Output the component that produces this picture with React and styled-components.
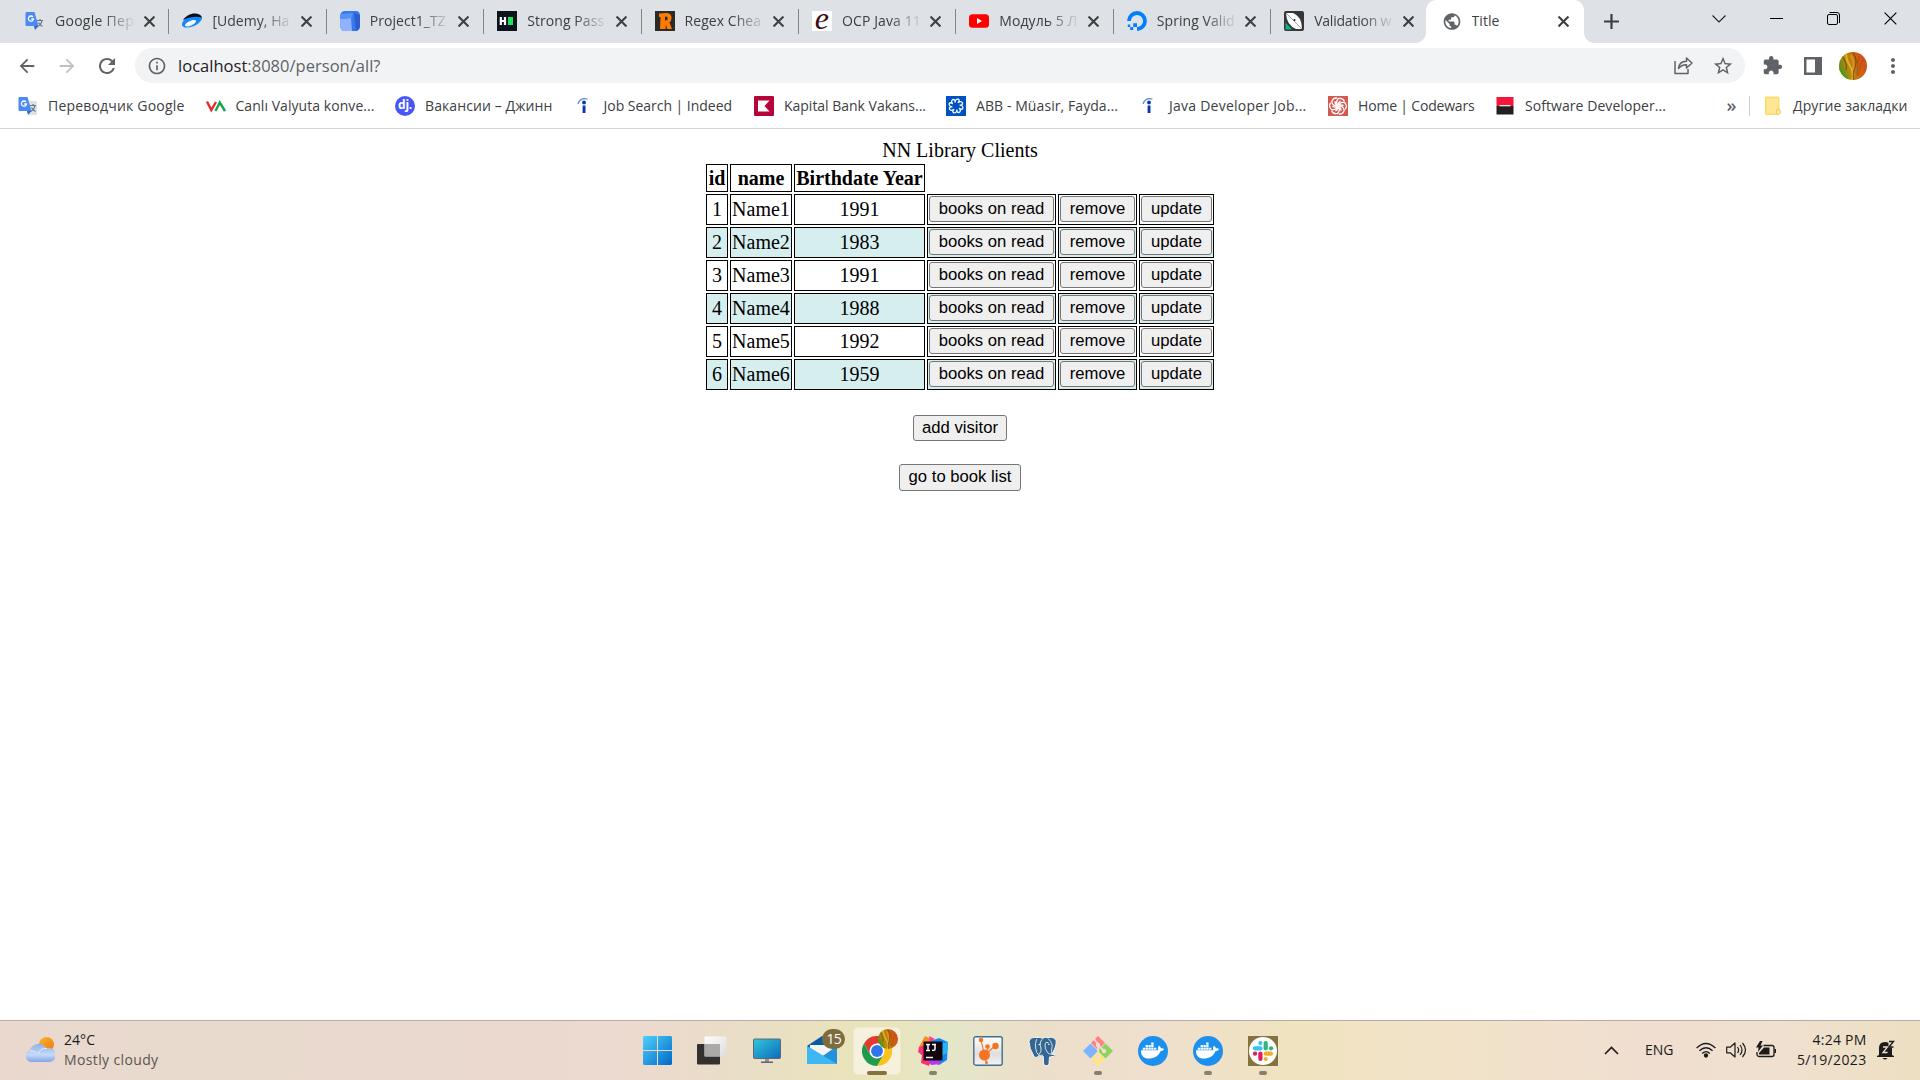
import React, { useLayoutEffect, useRef, useState } from "react";
import styled, { createGlobalStyle, css } from "styled-components";
import {
  MdArrowBack, MdArrowForward, MdRefresh, MdInfoOutline, MdStarBorder,
  MdExtension, MdMoreVert, MdPublic,
} from "react-icons/md";
import { FaDocker } from "react-icons/fa";

const Global = createGlobalStyle`
  *, *::before, *::after { box-sizing: border-box; }
  html, body { margin: 0; padding: 0; overflow: hidden; background: #fff; }
`;

const UI = `"Open Sans", "Noto Sans", sans-serif`;

const Screen = styled.div`
  width: 1920px;
  height: 1080px;
  display: flex;
  flex-direction: column;
  background: #fff;
  font-family: ${UI};
`;

/* ---------- text that tracks itself to a given width ---------- */
const FitBox = styled.span`
  display: inline-block;
  white-space: pre;
  font-size: ${(p) => p.$size || 14}px;
  line-height: 20px;
  color: ${(p) => p.$color || "#3c4043"};
`;

function Fit({ width, size, color, children }) {
  const ref = useRef(null);
  const [spacing, setSpacing] = useState(null);
  useLayoutEffect(() => {
    const el = ref.current;
    const natural = el.getBoundingClientRect().width;
    setSpacing((width - natural) / el.textContent.length);
  }, [width]);
  return (
    <FitBox ref={ref} $size={size} $color={color} style={spacing === null ? undefined : { letterSpacing: spacing + "px" }}>
      {children}
    </FitBox>
  );
}

/* ---------- tab strip ---------- */
const TabStrip = styled.div`
  height: 43px;
  flex: none;
  display: flex;
  background: #dee1e6;
  padding-left: 11px;
  overflow: hidden;
`;

const Tab = styled.div`
  position: relative;
  width: 157.4px;
  flex: none;
  height: 43px;
  display: flex;
  align-items: center;
  padding: 0 0 1px 14px;
  ${(p) => p.$line && css`
    &::after {
      content: "";
      position: absolute;
      right: -1px;
      top: 9px;
      width: 1px;
      height: 25px;
      background: #80868b;
    }
  `}
  ${(p) => p.$active && css`
    z-index: 1;
    &::before {
      content: "";
      position: absolute;
      z-index: -1;
      inset: 0 1px 0 -1.6px;
      background: #fff;
      border-radius: 10px 10px 0 0;
    }
  `}
`;

const Flare = styled.i`
  position: absolute;
  bottom: 0;
  width: 10px;
  height: 10px;
  ${(p) => (p.$right
    ? css`right: -9px; background: radial-gradient(circle at 100% 0, transparent 9.5px, #fff 10px);`
    : css`left: -11.5px; background: radial-gradient(circle at 0 0, transparent 9.5px, #fff 10px);`)}
`;

const TabIcon = styled.span`
  width: 20px;
  height: 20px;
  flex: none;
  display: flex;
  align-items: center;
  justify-content: center;
`;

const TabTitle = styled.span`
  margin-left: 10px;
  width: 79px;
  height: 22px;
  flex: none;
  display: flex;
  align-items: center;
  overflow: hidden;
  white-space: nowrap;
  ${(p) => p.$fade && css`
    mask-image: linear-gradient(90deg, #000 48px, transparent 81px);
  `}
`;

const CloseX = styled.span`
  margin-left: ${(p) => (p.$active ? 7.5 : 9.5)}px;
  flex: none;
  display: flex;
`;

const Controls = styled.div`
  margin-left: auto;
  display: flex;
  height: 37px;
  padding-right: 0.5px;
`;

const Control = styled.span`
  width: 57.4px;
  display: flex;
  align-items: center;
  justify-content: center;
`;

const NewTab = styled.span`
  width: 53px;
  height: 42px;
  display: flex;
  align-items: center;
  justify-content: center;
`;

/* ---------- toolbar ---------- */
const Toolbar = styled.div`
  height: 45px;
  flex: none;
  display: flex;
  align-items: center;
  padding: 0 7.5px 0 7px;
  color: #5f6368;
`;

const ToolSlot = styled.span`
  width: 40px;
  height: 35px;
  flex: none;
  display: flex;
  align-items: center;
  justify-content: center;
  color: ${(p) => (p.$dim ? "#bdc1c6" : "#5f6368")};
`;

const Omnibox = styled.div`
  flex: 1;
  margin: 0 7.5px 0 8px;
  height: 35px;
  border-radius: 18px;
  background: #f1f3f4;
  display: flex;
  align-items: center;
  padding: 0 2px;
`;

const Url = styled.div`
  flex: 1;
  padding-left: 1px;
  height: 24px;
  display: flex;
  align-items: center;
  b { font-weight: 400; color: #202124; }
`;

/* ---------- bookmarks ---------- */
const Bookmarks = styled.div`
  height: 41px;
  flex: none;
  display: flex;
  align-items: center;
  padding: 0 0 4px 18px;
  border-bottom: 1px solid #d4d5d7;
`;

const Bookmark = styled.span`
  width: ${(p) => p.$w}px;
  flex: none;
  display: flex;
  align-items: center;
  gap: 10px;
`;

const More = styled.span`
  width: 28.5px;
  flex: none;
  padding: 0 0 2px 6px;
  font-size: 18px;
  line-height: 18px;
  color: #5f6368;
  font-weight: 600;
`;

const Rule = styled.span`
  width: 1px;
  flex: none;
  height: 20px;
  background: #cbcdd1;
  margin-right: 13px;
`;

/* ---------- page ---------- */
const Page = styled.main`
  flex: 1;
  display: flex;
  flex-direction: column;
  align-items: center;
  padding-top: 10px;
  font-family: "Liberation Serif", "Times New Roman", serif;
  font-size: 20px;
  line-height: 23px;
  color: #000;
`;

const Table = styled.table`
  width: 512px;
  table-layout: fixed;
  border-collapse: separate;
  border-spacing: 2px;
  text-align: center;
`;

const Caption = styled.caption`
  padding: 0;
  height: 23px;
`;

const Row = styled.tr`
  height: ${(p) => p.$h || 31}px;
  background: ${(p) => (p.$shade ? "#d6eeee" : "transparent")};
`;

const Head = styled.th`
  border: 1px solid #000;
  padding: 0;
  white-space: nowrap;
`;

const Cell = styled.td`
  border: 1px solid #000;
  padding: ${(p) => (p.$action ? "1px 1px 2px" : "0")};
  white-space: nowrap;
`;

const Button = styled.button`
  display: block;
  width: ${(p) => (p.$w ? p.$w + "px" : "100%")};
  height: ${(p) => (p.$tall ? 27 : 26)}px;
  margin: ${(p) => p.$top || 0}px 0 0;
  padding: 0 0 ${(p) => (p.$tall ? 1 : 0)}px;
  border: 1px solid #767676;
  border-radius: 3px;
  background: #efefef;
  color: #000;
  font: 16.667px/22px "Liberation Sans", Arial, sans-serif;
  white-space: nowrap;
`;

/* ---------- taskbar ---------- */
const Taskbar = styled.footer`
  height: 60px;
  flex: none;
  display: flex;
  border-top: 1px solid #b9aca6;
  background: linear-gradient(90deg, #ead8cf 0, #e8dacd 200px, #ead9cf 400px, #ecd9d0 620px, #e9dfc5 760px, #eae5b9 880px, #e4e6c9 950px, #ecdfca 1040px, #efdfce 1150px, #f0e3bf 1290px, #f1e3c6 1400px, #f0dfd0 1640px, #f0e0cf 1780px, #eddfc2 1920px);
`;

const Weather = styled.div`
  width: 629.5px;
  display: flex;
  align-items: center;
  padding: 0 0 1px 25px;
  gap: 9px;
`;

const Lines = styled.div`
  display: flex;
  flex-direction: column;
  align-items: ${(p) => (p.$end ? "flex-end" : "flex-start")};
`;

const Apps = styled.div`
  display: flex;
  width: 974.5px;
`;

const AppSlot = styled.span`
  width: 55.1px;
  height: 59px;
  position: relative;
  display: flex;
  align-items: center;
  justify-content: center;
`;

const ActivePlate = styled.span`
  width: 48px;
  height: 48px;
  border-radius: 5px;
  background: #f5f1dd;
  border: 1px solid #efe9d0;
  display: flex;
  align-items: center;
  justify-content: center;
`;

const Running = styled.i`
  position: absolute;
  left: 50%;
  bottom: 5px;
  width: ${(p) => (p.$wide ? 20 : 8)}px;
  height: 4px;
  border-radius: 2px;
  transform: translateX(-50%);
  background: ${(p) => (p.$wide ? "#85733f" : "#85806f")};
`;

const Badge = styled.span`
  position: absolute;
  left: 27.5px;
  top: 8px;
  width: 23px;
  height: 20px;
  border-radius: 10px;
  background: #7e6c3c;
  color: #fff;
  font-size: 14px;
  line-height: 20px;
  text-align: center;
  letter-spacing: -0.8px;
`;

const MiniAvatar = styled.span`
  position: absolute;
  left: 28.5px;
  top: 8px;
  display: flex;
`;

const Tray = styled.div`
  flex: 1;
  display: flex;
  align-items: center;
  padding-bottom: 1px;
`;

const TraySlot = styled.span`
  width: ${(p) => p.$w}px;
  flex: none;
  display: flex;
  align-items: center;
`;

/* ---------- drawings ---------- */
const Cross = ({ s = 11, w = 1.9, c = "#3c4043" }) => (
  <svg width={s} height={s} viewBox="0 0 10 10"><path d="M.5.5l9 9M9.500.5l-9 9" stroke={c} strokeWidth={w} /></svg>
);

const Translate = () => (
  <svg width="20" height="20" viewBox="0 0 20 20">
    <path d="M8 5h10a1 1 0 0 1 1 1v12a1 1 0 0 1-1 1h-7z" fill="#dfe1e5" />
    <path d="M12 9.500h6M15 8v1.500M17 9.500c-.5 3-2.500 5-4.500 6M13.500 11.500c1 2 2 3 4 4" stroke="#607988" strokeWidth="1.200" fill="none" />
    <path d="M1.500 1h8l4 14h-12a1 1 0 0 1-1-1V2a1 1 0 0 1 1-1z" fill="#4a8af4" />
    <path d="M9 15h4.500L10 19z" fill="#3261c2" />
    <path d="M8 5.900A2.600 2.600 0 1 0 8.600 8H6.200" stroke="#fff" strokeWidth="1.300" fill="none" />
  </svg>
);

const Swoosh = () => (
  <svg width="20" height="20" viewBox="0 0 20 20">
    <path d="M0 13C1 8 7 4 13 4c5 0 7.500 2 7 3.500C18 13 10 17 5 16.500c-3-.2-5.500-1-5-3.500z" fill="#1687f8" />
    <path d="M1 9C4 4.500 9 2 14 2.500c3 .3 5 1.500 6 4C15 5 8 5.500 1 9z" fill="#06101f" />
    <ellipse cx="8.500" cy="12.300" rx="6" ry="2.300" transform="rotate(-24 8.500 12.300)" fill="#f3faff" />
  </svg>
);

const BlueBox = () => (
  <svg width="20" height="20" viewBox="0 0 20 20">
    <path d="M4 0h12q4 0 4 5v10q0 4-4 5H5q-4 0-4.500-4L0 6Q0 1 4 0z" fill="#3778ec" />
    <path d="M14 2l6 2v12q-1 3-4 4z" fill="#2a5fcf" />
    <path d="M0 8l11-1 1 13H5q-4 0-4.500-4z" fill="#8fb3ff" />
    <path d="M1 3l12-1-1 5L0 8z" fill="#5792f7" />
  </svg>
);

const HackerMark = () => (
  <svg width="20" height="20" viewBox="0 0 20 20">
    <path fill="#0e141e" d="M0 0h20v20H0z" />
    <path d="M3.800 6v8M8 6v8M3.800 10H8" stroke="#fff" strokeWidth="2.200" />
    <path fill="#1ee45b" d="M11 6h5v8h-5z" />
  </svg>
);

const OrangeR = () => (
  <svg width="20" height="20" viewBox="0 0 20 20">
    <path fill="#2b2b25" d="M0 0h20v20H0z" />
    <path fill="#ff7a00" fillRule="evenodd" d="M4 2.500L12 2q4.500.5 4.500 5 0 3-2 4.500L17 18h-5l-1-4.500-.5 4.500H5l.5-12H4zM10 5.500v4l2.500-.5V6z" />
  </svg>
);

const EnthuBox = styled.span`
  width: 20px;
  height: 20px;
  flex: none;
  background: #fff;
  color: #3a0d12;
  font: italic 32px/14px "Liberation Serif", serif;
  text-align: center;
`;

const YouTube = () => (
  <svg width="20" height="20" viewBox="0 0 20 20"><rect y="3.300" width="20" height="13.500" rx="3.500" fill="red" /><path d="M8 7l5 3-5 3z" fill="#fff" /></svg>
);

const Ocean = () => (
  <svg width="20" height="20" viewBox="0 0 20 20">
    <path d="M2 10a8 8 0 1 1 8 8" fill="none" stroke="#0080ff" strokeWidth="3.800" />
    <path d="M6.200 12.200H10V16H6.200zM3.200 16h3v3h-3zM.8 13.600h2.400V16H.8z" fill="#0080ff" />
  </svg>
);

const Baeldung = () => (
  <svg width="20" height="20" viewBox="0 0 20 20">
    <rect width="20" height="20" rx="2" fill="#35373a" />
    <path d="M2 2h7q9 3.500 9 16h-6Q2.500 14 2 2z" fill="#fff" />
    <path d="M2 2l16 16" stroke="#777" strokeWidth=".7" />
    <circle cx="10.500" cy="9" r="1" fill="#222" />
    <path d="M1.500 11.500l6.500 7H1.500z" fill="#11b08a" />
  </svg>
);

const Valyuta = () => (
  <svg width="20" height="20" viewBox="0 0 20 20" fill="none" strokeWidth="2.400">
    <path d="M1 5.500l4.300 8.500L10 6" stroke="#e32a2c" /><path d="M9.500 15l4.300-8.500L19 15" stroke="#17a650" />
  </svg>
);

const DjBadge = styled.span`
  width: 20px;
  height: 20px;
  flex: none;
  border-radius: 50%;
  background: #4756f5;
  color: #fff;
  font: bold 12px/17px ${UI};
  letter-spacing: -0.3px;
  text-align: center;
`;

const Indeed = () => (
  <svg width="20" height="20" viewBox="0 0 20 20">
    <path d="M4 8Q6 1.500 13.500 3" fill="none" stroke="#5b83d6" strokeWidth="1.200" />
    <circle cx="10" cy="6.500" r="1.900" fill="#0b3aa5" /><path d="M8.600 9.500h2.900V17H8.600z" fill="#0b3aa5" />
  </svg>
);

const Kapital = () => (
  <svg width="20" height="20" viewBox="0 0 20 20"><rect width="20" height="20" rx="1" fill="#b5063a" /><path d="M4 4.500h11.500L10.500 10l5 5.500H4z" fill="#fff" /></svg>
);

const petals = [0, 45, 90, 135, 180, 225, 270, 315];
const Abb = () => (
  <svg width="20" height="20" viewBox="0 0 20 20"><path fill="#0052c2" d="M0 0h20v20H0z" />
    <g fill="none" stroke="#fff" strokeWidth="1.200">{petals.map((a) => <path key={a} transform={`rotate(${a} 10 10)`} d="M9 6.500Q9.500 2.500 12.500 3.200Q14 4.500 12.500 6.500" />)}</g>
  </svg>
);

const Codewars = () => (
  <svg width="20" height="20" viewBox="0 0 20 20"><rect width="20" height="20" fill="#d4594f" />
    <g fill="none" stroke="#fff" strokeWidth="1.300">{[0, 60, 120, 180, 240, 300].map((a) => <path key={a} transform={`rotate(${a} 10 10)`} d="M10 10Q7 6 10.500 2.500Q15 1.500 16.500 5.500M10 10Q9.500 7 12.500 5" />)}</g>
  </svg>
);

const RedBlack = () => (
  <svg width="20" height="20" viewBox="0 0 20 20"><path fill="#f5163b" d="M1.500 1h17v9h-17z" /><path fill="#231f20" d="M1.500 10h17v8.500h-17z" /><path d="M4.500 9.700h11" stroke="#fff" strokeWidth="1.200" /></svg>
);

const Folder = () => (
  <svg width="20" height="20" viewBox="0 0 20 20"><rect x="2" y=".5" width="14.500" height="18.500" rx="1.500" fill="#fbdc6c" /><path d="M3.500 2.500H15V13l-1.500 4.500h-10z" fill="#ffe694" /><path d="M13.500 18v-4.500q3-2 4 1.500V17q-1.500 2.500-4 1z" fill="#ffe694" stroke="#efc84e" strokeWidth=".8" /></svg>
);

const Leaf = ({ s, id }) => (
  <svg width={s} height={s} viewBox="0 0 28 28">
    <defs>
      <linearGradient id={id} x1="0" y1=".7" x2="1" y2=".4"><stop offset="0" stopColor="#5b8a12" /><stop offset=".35" stopColor="#b98a10" /><stop offset=".65" stopColor="#c8690f" /><stop offset="1" stopColor="#d8481a" /></linearGradient>
      <clipPath id={id + "c"}><circle cx="14" cy="14" r="14" /></clipPath>
    </defs>
    <g clipPath={`url(#${id}c)`} fill="none">
      <path fill={`url(#${id})`} d="M0 0h28v28H0z" />
      <path d="M7 0q0 8 4 14t2 14" stroke="#e6bb25" strokeWidth="2" opacity=".8" />
      <path d="M3 4q6 8 4 14M14 1q5 6 2 14t-1 13" stroke="#5a3308" strokeWidth="1.100" opacity=".65" />
      <path d="M12 3q4 8 2 15" stroke="#d6a51a" strokeWidth="2" opacity=".8" />
      <path d="M20 4q-2 9-2 20M24 8q-4 6-4 16" stroke="#963c0c" strokeWidth="1.200" opacity=".4" />
      <path d="M0 17q5 3 8 11" stroke="#3fa516" strokeWidth="3" opacity=".8" />
    </g>
  </svg>
);

const Share = () => (
  <svg width="21" height="21" viewBox="0 0 21 21" fill="none" stroke="#5f6368" strokeWidth="1.500" strokeLinejoin="round">
    <path d="M2 6v12.500h13V14" /><path d="M5.500 13.500Q6 6.500 13.500 6.300V3L19 8l-5.500 5V9.700Q8.500 9.500 5.500 13.500z" />
  </svg>
);

const Panel = () => (
  <svg width="18" height="18" viewBox="0 0 18 18"><path fill="#5f6368" fillRule="evenodd" d="M0 0h18v18H0zM2.500 2.500v13H11v-13z" /></svg>
);

const Cloud = () => (
  <svg width="30" height="26" viewBox="0 0 30 26">
    <defs>
      <linearGradient id="sun" x1="0" y1="0" x2="1" y2="1"><stop stopColor="#f6b62f" /><stop offset="1" stopColor="#f5740f" /></linearGradient>
      <linearGradient id="cl" x1="0" y1="0" x2="0" y2="1"><stop stopColor="#8fb0e6" /><stop offset=".6" stopColor="#c6d9f8" /><stop offset="1" stopColor="#7fa3ea" /></linearGradient>
    </defs>
    <circle cx="21.500" cy="7.500" r="7.500" fill="url(#sun)" />
    <path d="M6 25a6 6 0 0 1-1-11.700A9 9 0 0 1 21.500 11.500 7 7 0 1 1 23 25z" fill="url(#cl)" />
    <path d="M13 17Q16 10.500 22 11.500M5 14q4-.5 6 2" stroke="#e5eefc" strokeWidth="1" fill="none" />
  </svg>
);

const Windows = () => (
  <svg width="29" height="29" viewBox="0 0 29 29"><defs><linearGradient id="win" gradientUnits="userSpaceOnUse" x1="0" y1="0" x2="29" y2="29"><stop stopColor="#4fd0fb" /><stop offset="1" stopColor="#0069c8" /></linearGradient></defs><path fill="url(#win)" d="M1 0h13v14H0V1zM15 0h13l1 1v13H15zM0 15h14v14H1l-1-1zM15 15h14v13l-1 1H15z" /></svg>
);

const TaskView = () => (
  <svg width="30" height="29" viewBox="0 0 30 29"><defs><linearGradient id="tv" x1="0" y1="0" x2="1" y2="1"><stop stopColor="#fff" /><stop offset="1" stopColor="#dcdcdc" /></linearGradient></defs><rect y="8" width="23" height="20.500" rx="1" fill="#32312e" /><rect x="7.500" y=".5" width="22" height="20" rx="1" fill="url(#tv)" opacity=".96" /><path d="M7.500 8H23v12.500H7.500z" fill="#a09f9e" opacity=".85" /></svg>
);

const Monitor = () => (
  <svg width="28" height="26" viewBox="0 0 28 26"><defs><linearGradient id="mo" x1="0" y1="0" x2="1" y2="1"><stop stopColor="#2fc7da" /><stop offset="1" stopColor="#0f6bbd" /></linearGradient></defs><rect x=".5" y="1" width="27" height="19.500" rx="1" fill="url(#mo)" stroke="#5d6873" /><path d="M12 21h4v3h-4z" fill="#8a959e" /><path d="M8 23.500h12V25H8z" fill="#5c6670" /></svg>
);

const Mail = () => (
  <svg width="30" height="29" viewBox="0 0 30 29"><path d="M0 10L15 0l15 10v5H0z" fill="#0b5aa5" /><path d="M3 9h24v10H3z" fill="#f4f4f4" /><path d="M0 10l16 10 14-10v18H0z" fill="#2ba4e8" /><path d="M16 20L30 10v18z" fill="#2391dc" /><path d="M0 10l30 18H0z" fill="#3db8f2" /></svg>
);

const Chrome = () => (
  <svg width="30" height="30" viewBox="0 0 48 48">
    <path d="M24 12h20.800A24 24 0 0 0 3.200 12L13.600 30z" fill="#e33b2e" />
    <path d="M34.400 30L24 48A24 24 0 0 0 44.800 12H24z" fill="#fcc31e" />
    <path d="M13.600 30L3.200 12A24 24 0 0 0 24 48l10.400-18z" fill="#219a4e" />
    <circle cx="24" cy="24" r="12" fill="#fff" /><circle cx="24" cy="24" r="9.500" fill="#2f74e8" />
  </svg>
);

const Idea = () => (
  <svg width="30" height="30" viewBox="0 0 30 30">
    <path d="M1 11L7 0l8 4-3 12L3 19z" fill="#fc8a22" /><path d="M1 11l7-2 5 15-2 6-8-3 1-8-4-3z" fill="#fe2d78" />
    <path d="M13 5l8-3 9 4-1 18-8 5-10-4z" fill="#1689f5" /><path d="M22 8l8-2-1 11-8 4z" fill="#25b3f8" /><path d="M10 24l10-2 3 6-10 1z" fill="#b43af2" /><path d="M11 0l6 3-5 3z" fill="#fd3c99" />
    <path d="M5.500 5.500h19v19h-19z" fill="#12060f" />
    <path d="M8 8.500h4M10 8.500v6M8 14.500h4M14 8.500h4M17 8.500v4.500q0 1.700-3 1.300M8 21.500h7" stroke="#fff" strokeWidth="1.500" fill="none" />
  </svg>
);

const Nodes = () => (
  <svg width="30" height="30" viewBox="0 0 30 30"><defs><linearGradient id="nd" x1="0" y1="0" x2="0" y2="1"><stop stopColor="#fff" /><stop offset=".6" stopColor="#dedede" /><stop offset="1" stopColor="#f4f4f4" /></linearGradient></defs><rect x=".8" y=".8" width="28.400" height="28.400" rx="2" fill="url(#nd)" stroke="#456b8e" strokeWidth="1.400" /><path d="M11.500 19L8 4M11.500 19l4-8M11.500 19L22 10M11.500 19l2 8" stroke="#f47521" strokeWidth="1.100" /><g fill="#f47521"><circle cx="11.500" cy="19" r="5.500" /><circle cx="8" cy="4" r="2.300" /><circle cx="14.500" cy="10.500" r="2.300" /><circle cx="22.500" cy="10" r="3.200" /><circle cx="13.500" cy="26.500" r="1.500" /></g></svg>
);

const Postgres = () => (
  <svg width="30" height="30" viewBox="0 0 30 30">
    <path d="M9 1.500Q12 1 14.500 2.300 17 .8 20 1.500 26 .3 28 4.500q1 5-3.500 12.500l-.3 1.500q2.500.5 3.800-.2-.8 2.700-5.500 2.500l-1 .2-.5 6.500q-.5 2.500-3 2.300-2.500-.2-2.500-2.800l-.2-6.500-2-.5q-1 1.800-3 .3Q8 23 6 20.500 1 12 1 5.500 2.500.5 9 1.500z" fill="#336791" stroke="#f3f6f8" strokeWidth="1" strokeLinejoin="round" />
    <path d="M8.500 3.500q-2 4-.7 9.500.5 4 3 6.300M14 3.500q-3 3-1 8.500 1 4-2 6.500M20.500 2.800q5 5 3.300 10-1 2.500.2 5M20 6.500q-2.500-1-3 1.500-.5 5 2.500 8.500 1.500 2 4.500 1.800M11 19.500l3.500-.3" fill="none" stroke="#e9eff4" strokeWidth=".9" strokeLinecap="round" />
    <circle cx="11.300" cy="8.500" r=".8" fill="#fff" /><circle cx="20.800" cy="8.300" r=".8" fill="#fff" />
  </svg>
);

const Git = () => (
  <svg width="30" height="30" viewBox="0 0 30 30">
    <path d="M15 0l7 7-7 7-7-7z" fill="#ff8080" /><path d="M7.500 7.500l7.500 7.500-7.500 7.500L0 15z" fill="#80b3ff" /><path d="M22.500 7.500L30 15l-7.500 7.500L15 15z" fill="#8dd35f" /><path d="M15 15.500l7 7-7 7.500-7-7.500z" fill="#ffe680" />
    <path d="M11 3l4 5v14M15 9l6 6" stroke="#efdfcd" strokeWidth="1.800" fill="none" /><g fill="#efdfcd"><circle cx="15" cy="9" r="2.200" /><circle cx="21" cy="15" r="2.200" /><circle cx="15" cy="22" r="2.200" /></g>
  </svg>
);

const DockerDisc = styled.span`
  width: 30px;
  height: 30px;
  border-radius: 50%;
  background: #1b90ee;
  color: #fff;
  display: flex;
  align-items: center;
  justify-content: center;
  font-size: 23px;
`;

const SlackPlate = styled.span`
  width: 30px;
  height: 30px;
  background: #85733f;
  display: flex;
`;

const Slack = () => (
  <svg width="30" height="30" viewBox="0 0 30 30"><circle cx="15" cy="15" r="14" fill="#fff" />
    <g strokeWidth="4.200" strokeLinecap="round">
      <path d="M7 12.300h5.500" stroke="#36c5f0" /><path d="M12.400 7v.1" stroke="#36c5f0" /><path d="M17.700 7v5.300" stroke="#2eb67d" /><path d="M23 12.300h.1" stroke="#2eb67d" /><path d="M17.700 17.700H23" stroke="#ecb22e" /><path d="M17.700 23v.1" stroke="#ecb22e" /><path d="M12.400 17.700V23" stroke="#e01e5a" /><path d="M7 17.700h.1" stroke="#e01e5a" />
    </g>
  </svg>
);

const Wifi = () => (
  <svg width="20" height="16" viewBox="0 0 20 16" fill="none" stroke="#1b1b1b" strokeWidth="1.300"><path d="M.6 6Q10-3 19.400 6M3.400 8.700q6.600-6 13.200 0M6.200 11.400q3.800-3.500 7.600 0" /><circle cx="10" cy="13.500" r="1.500" fill="#1b1b1b" /></svg>
);
const Speaker = () => (
  <svg width="21" height="18" viewBox="0 0 21 18" fill="none" stroke="#1b1b1b" strokeWidth="1.200"><path d="M.7 6.200h3.500L9 2v14l-4.800-4.200H.7z" strokeLinejoin="round" /><path d="M11.500 6q2.300 3 0 6M14 4q4 5 0 10M16.500 2q6 7 0 14" /></svg>
);
const Battery = () => (
  <svg width="21" height="18" viewBox="0 0 21 18"><path d="M7.500 4.500H16a2 2 0 0 1 2 2v7a2 2 0 0 1-2 2H3a2 2 0 0 1-2-2V11" fill="none" stroke="#1b1b1b" strokeWidth="1.300" /><path d="M18.500 8H20v4h-1.500zM8 6.500h5.500v7H3V12z" fill="#1b1b1b" /><path d="M4 0L0 6.500h2.500L2 11l5-6.500H4.500L6.500 0z" fill="#1b1b1b" /></svg>
);
const Bell = () => (
  <svg width="18" height="20" viewBox="0 0 18 20"><path d="M2 15V8q0-6 6-6 7 0 7 7v6l2 1v1H0v-1z" fill="#1b1b1b" /><path d="M5.500 18h5q-2.500 3-5 0z" fill="#1b1b1b" /><path d="M6 7h4.500L6 12.500h4.500" stroke="#efe0cb" strokeWidth="1.300" fill="none" /><path d="M11.500 0h6v7.500h-6z" fill="#efe0cb" /><path d="M12 1.500h4.500L12 7h4.500" stroke="#1b1b1b" strokeWidth="1.400" fill="none" /></svg>
);

/* ---------- data ---------- */
const tabs = [
  ["Google Пер", 79, <Translate />],
  ["[Udemy, Ha", 77, <Swoosh />],
  ["Project1_TZ", 76, <BlueBox />],
  ["Strong Pass", 77, <HackerMark />],
  ["Regex Chea", 76.5, <OrangeR />],
  ["OCP Java 11", 79, <EnthuBox>e</EnthuBox>],
  ["Модуль 5 Л", 78, <YouTube />],
  ["Spring Valid", 78, <Ocean />],
  ["Validation w", 77, <Baeldung />],
];

const bookmarks = [
  ["Переводчик Google", 136.5, 187.5, <Translate />],
  ["Canlı Valyuta konve...", 139, 189.5, <Valyuta />],
  ["Вакансии – Джинн", 127.5, 178.5, <DjBadge>dj.</DjBadge>],
  ["Job Search | Indeed", 128.5, 180.5, <Indeed />],
  ["Kapital Bank Vakans...", 142, 192, <Kapital />],
  ["ABB - Müasir, Fayda...", 142, 193, <Abb />],
  ["Java Developer Job...", 137.5, 189, <Indeed />],
  ["Home | Codewars", 116.5, 167, <Codewars />],
  ["Software Developer...", 141, 225.5, <RedBlack />],
];

const people = [
  [1, "Name1", 1991], [2, "Name2", 1983], [3, "Name3", 1991],
  [4, "Name4", 1988], [5, "Name5", 1992], [6, "Name6", 1959],
];

const columns = [22, 62, 131, 129, 79, 75];

export default function App() {
  return (
    <Screen>
      <Global />
      <TabStrip>
        {tabs.map(([title, w, icon], i) => (
          <Tab key={title} $line={i < 8}>
            <TabIcon>{icon}</TabIcon>
            <TabTitle $fade><Fit width={w}>{title}</Fit></TabTitle>
            <CloseX><Cross /></CloseX>
          </Tab>
        ))}
        <Tab $active>
          <Flare /><Flare $right />
          <TabIcon><MdPublic size={21} color="#5f6368" /></TabIcon>
          <TabTitle><Fit width={28}>Title</Fit></TabTitle>
          <CloseX $active><Cross /></CloseX>
        </Tab>
        <NewTab><svg width="15" height="15" viewBox="0 0 15 15"><path d="M7.500 0v15M0 7.500h15" stroke="#3c4043" strokeWidth="2.200" /></svg></NewTab>
        <Controls>
          <Control><svg width="14" height="8" viewBox="0 0 14 8"><path d="M.5.5L7 7 13.500.5" fill="none" stroke="#222" strokeWidth="1.100" /></svg></Control>
          <Control><svg width="13" height="1"><path fill="#000" d="M0 0h13v1H0z" /></svg></Control>
          <Control><svg width="13" height="13" viewBox="0 0 13 13" fill="none" stroke="#000"><rect x=".5" y="2.500" width="10" height="10" rx="1.500" /><path d="M2.500.5H10A2.500 2.500 0 0 1 12.500 3v8" /></svg></Control>
          <Control><Cross s={13} w={0.9} c="#000" /></Control>
        </Controls>
      </TabStrip>

      <Toolbar>
        <ToolSlot><MdArrowBack size={22} /></ToolSlot>
        <ToolSlot $dim><MdArrowForward size={22} /></ToolSlot>
        <ToolSlot><MdRefresh size={24} /></ToolSlot>
        <Omnibox>
          <ToolSlot><MdInfoOutline size={20} /></ToolSlot>
          <Url><Fit width={202.5} size={16.5} color="#5f6368"><b>localhost</b>:8080/person/all?</Fit></Url>
          <ToolSlot><Share /></ToolSlot>
          <ToolSlot><MdStarBorder size={22} /></ToolSlot>
        </Omnibox>
        <ToolSlot><MdExtension size={21} /></ToolSlot>
        <ToolSlot><Panel /></ToolSlot>
        <ToolSlot><Leaf s={28} id="leafA" /></ToolSlot>
        <ToolSlot><MdMoreVert size={24} /></ToolSlot>
      </Toolbar>

      <Bookmarks>
        {bookmarks.map(([title, w, slot, icon]) => (
          <Bookmark key={title} $w={slot}>
            <TabIcon>{icon}</TabIcon>
            <Fit width={w}>{title}</Fit>
          </Bookmark>
        ))}
        <More>»</More>
        <Rule />
        <Bookmark $w={150}>
          <TabIcon><Folder /></TabIcon>
          <Fit width={114.5}>Другие закладки</Fit>
        </Bookmark>
      </Bookmarks>

      <Page>
        <Table>
          <Caption>NN Library Clients</Caption>
          <colgroup>{columns.map((w) => <col key={w} width={w} />)}</colgroup>
          <tbody>
            <Row $h={28}><Head>id</Head><Head>name</Head><Head>Birthdate Year</Head></Row>
            {people.map(([id, name, year]) => (
              <Row key={id} $shade={id % 2 === 0}>
                <Cell>{id}</Cell>
                <Cell>{name}</Cell>
                <Cell>{year}</Cell>
                <Cell $action><Button>books on read</Button></Cell>
                <Cell $action><Button>remove</Button></Cell>
                <Cell $action><Button>update</Button></Cell>
              </Row>
            ))}
          </tbody>
        </Table>
        <Button $w={94} $top={23}>add visitor</Button>
        <Button $w={122} $tall $top={23}>go to book list</Button>
      </Page>

      <Taskbar>
        <Weather>
          <Cloud />
          <Lines>
            <Fit width={31} color="#1b1b1b">24°C</Fit>
            <Fit width={94.5} color="#5c5552">Mostly cloudy</Fit>
          </Lines>
        </Weather>
        <Apps>
          <AppSlot><Windows /></AppSlot>
          <AppSlot><TaskView /></AppSlot>
          <AppSlot><Monitor /></AppSlot>
          <AppSlot><Mail /><Badge>15</Badge></AppSlot>
          <AppSlot><ActivePlate><Chrome /></ActivePlate><MiniAvatar><Leaf s={20} id="leafB" /></MiniAvatar><Running $wide /></AppSlot>
          <AppSlot><Idea /><Running /></AppSlot>
          <AppSlot><Nodes /></AppSlot>
          <AppSlot><Postgres /></AppSlot>
          <AppSlot><Git /><Running /></AppSlot>
          <AppSlot><DockerDisc><FaDocker /></DockerDisc></AppSlot>
          <AppSlot><DockerDisc><FaDocker /></DockerDisc><Running /></AppSlot>
          <AppSlot><SlackPlate><Slack /></SlackPlate><Running /></AppSlot>
        </Apps>
        <Tray>
          <TraySlot $w={41}><svg width="15" height="9" viewBox="0 0 15 9"><path d="M1 8l6.500-6.500L14 8" fill="none" stroke="#1b1b1b" strokeWidth="1.600" /></svg></TraySlot>
          <TraySlot $w={51}><Fit width={28.5} color="#1b1b1b">ENG</Fit></TraySlot>
          <TraySlot $w={30}><Wifi /></TraySlot>
          <TraySlot $w={30}><Speaker /></TraySlot>
          <TraySlot $w={41}><Battery /></TraySlot>
          <TraySlot $w={80}>
            <Lines $end>
              <Fit width={54} color="#1b1b1b">4:24 PM</Fit>
              <Fit width={69.5} color="#1b1b1b">5/19/2023</Fit>
            </Lines>
          </TraySlot>
          <Bell />
        </Tray>
      </Taskbar>
    </Screen>
  );
}
